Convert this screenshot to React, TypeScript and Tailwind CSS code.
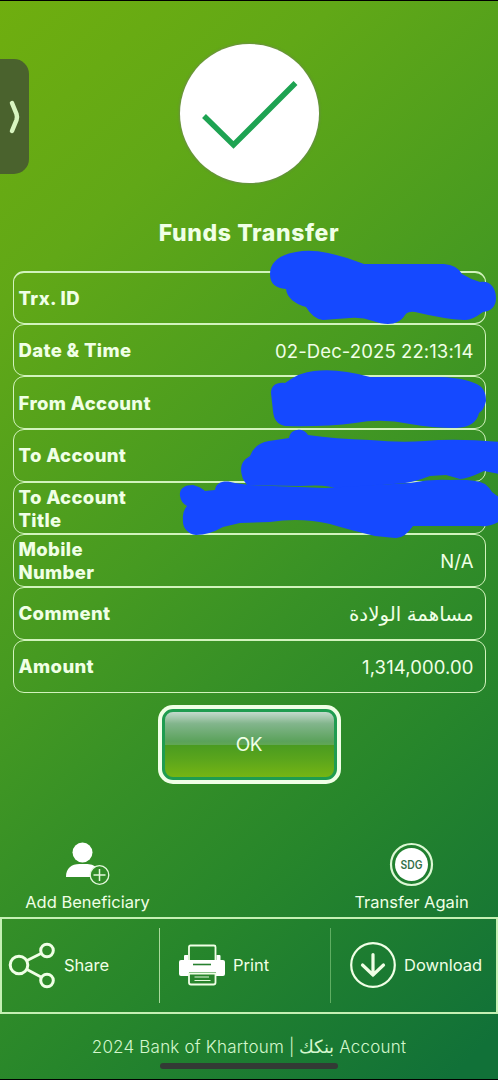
import type { ReactNode } from "react";
import { clsx } from "clsx";

interface DetailRow {
  label: string;
  value?: string;
  labelClass: string;
  rtl?: boolean;
}

const rows: DetailRow[] = [
  { label: "Trx. ID", labelClass: "w-40" },
  { label: "Date & Time", value: "02-Dec-2025 22:13:14", labelClass: "w-40" },
  { label: "From Account", labelClass: "w-40" },
  { label: "To Account", labelClass: "w-40" },
  { label: "To Account Title", labelClass: "w-30" },
  { label: "Mobile Number", value: "N/A", labelClass: "w-30" },
  { label: "Comment", value: "مساهمة الولادة", labelClass: "w-40", rtl: true },
  { label: "Amount", value: "1,314,000.00", labelClass: "w-40" },
];

export default function App() {
  return (
    <div className="relative flex h-[1080px] w-[498px] flex-col overflow-hidden border-y border-black bg-[linear-gradient(138deg,#6fae0f_0%,#61a817_20%,#469a21_45%,#389126_57%,#27862b_73%,#117138_97%)] font-['Inter','DejaVu_Sans',sans-serif] text-[#f0ffe6]">
      <SideHandle />

      <div className="mx-auto mt-[43px] flex size-[139px] shrink-0 items-center justify-center rounded-full bg-white shadow-[0_0_2px_1px_rgba(120,120,120,0.5)]">
        <svg viewBox="0 0 139 139" className="size-full" fill="none" aria-hidden="true">
          <path d="M24 72 L53.5 101 L115.500 39" stroke="#1ea352" strokeWidth="5.500" />
        </svg>
      </div>

      <h1 className="mt-[34px] text-center text-[23px] leading-8 font-extrabold tracking-[0.6px]">
        Funds Transfer
      </h1>

      <div className="relative mx-auto mt-[22px] w-[473px]">
        {rows.map((row) => (
          <Row key={row.label} {...row} />
        ))}
        <Scribbles />
      </div>

      <button className="mx-auto mt-3 h-[79px] w-[183px] shrink-0 rounded-[15px] bg-[#f0ffe6] p-1">
        <span className="flex size-full items-center justify-center rounded-[11px] border-[3px] border-[#1f9c50] bg-[linear-gradient(180deg,#c4dacd_0%,#82b58c_18%,#5ba25b_45%,#60a655_50%,#4a9b20_51%,#5aa51c_72%,#75b514_100%)] pt-0.5 text-[19px] tracking-[-0.3px]">
          OK
        </span>
      </button>

      <div className="mt-[58px] flex shrink-0 justify-between px-[26px] text-[16.5px] leading-6">
        <div className="flex w-[123px] flex-col items-center whitespace-nowrap">
          <AddPersonIcon />
          <span className="mt-[2px]">Add Beneficiary</span>
        </div>
        <div className="mr-1 flex w-[113px] flex-col items-center whitespace-nowrap">
          <CoinIcon />
          <span className="mt-[2px]">Transfer Again</span>
        </div>
      </div>

      <div className="mt-[3px] flex h-[97px] w-full shrink-0 items-center border-2 border-[#c5f0b4] text-[16.5px]">
        <Action label="Share" className="w-[157px] gap-2 pl-1.5">
          <ShareIcon />
        </Action>
        <Action label="Print" className="w-[171px] gap-2 border-l border-[#a9d99c] pl-[19px]">
          <PrinterIcon />
        </Action>
        <Action label="Download" className="flex-1 gap-2 border-l border-[#5fae62] pl-[19px]">
          <DownloadIcon />
        </Action>
      </div>

      <footer className="mt-[19px] text-center text-[17px] leading-7 font-light tracking-[0.2px] text-[#d4f7cd]">
        2024 Bank of Khartoum | <bdi className="text-lg">بنكك</bdi> Account
      </footer>
      <div className="mx-auto mt-[2px] h-[6px] w-[178px] shrink-0 rounded-full bg-[#333a35]" />
    </div>
  );
}

function SideHandle() {
  return (
    <div className="absolute top-[58px] left-0 flex h-[115px] w-[29px] items-center justify-center rounded-r-[15px] bg-[#4a622d]">
      <svg width="14" height="36" viewBox="0 0 14 36" fill="none" aria-hidden="true">
        <path
          d="M4 4 L8.500 15 Q9.500 18 8.500 21 L4 32"
          stroke="#d8f5c0"
          strokeWidth="4.500"
          strokeLinecap="round"
        />
      </svg>
    </div>
  );
}

function Row({ label, value, labelClass, rtl }: DetailRow) {
  return (
    <div className="flex h-[52.7px] items-center justify-between rounded-[11px] border border-[#d2f3bd] pt-px pr-[11px] pl-[5px] first:border-t-2">
      <span
        className={clsx("text-[18.5px] leading-[23px] font-extrabold tracking-[0.35px]", labelClass)}
      >
        {label}
      </span>
      {value ? (
        <span
          dir={rtl ? "rtl" : "ltr"}
          className={clsx("pt-0.5", rtl ? "text-[19.8px]" : "text-[18.5px] tracking-[0.1px]")}
        >
          {value}
        </span>
      ) : null}
    </div>
  );
}

// Marker strokes that hide the account details.
function Scribbles() {
  return (
    <svg
      className="pointer-events-none absolute -top-[30.5px] left-[157px]"
      width="330"
      height="310"
      viewBox="170 240 330 310"
      fill="#1549ff"
      aria-hidden="true"
    >
      <path d="M270 273C270 260 282 253 296 251Q310 248 328 252Q347 256 364 263H444Q457 264 462 273Q470 278 480 281C490 279 496 287 496 297C496 306 491 310 483 311Q471 320 464 319Q444 318 415 311Q408 310 405 314C399 324 387 325 373 320Q362 316 350 317L323 319Q313 318 306 306C295 303 287 297 286 288C276 287 270 283 270 273Z" />
      <path d="M271 392C271 385 276 381 285 382Q300 371 314 370Q338 367 370 376H440Q468 377 480 385C485 389 486 394 486 400Q484 409 479 412Q476 426 456 427Q432 427 410 423Q382 417 355 422Q325 426 285 425Q274 423 273 410Z" />
      <path d="M241 468Q241 460 250 455Q255 442 269 440L289 437C290 427 304 426 308 434Q335 438 370 439Q400 442 425 440Q455 437 500 441V473L484 470Q467 478 460 478L446 474L430 475Q414 481 405 482L337 488Q329 483 300 485L247 484Q241 477 241 468Z" />
      <path d="M180 495C179 488 184 484 193 484Q201 486 205 490L215 489C216 480 226 479 235 482L249 484L325 487L410 482Q430 478 450 479Q475 478 485 483Q490 487 492 491L500 497V520Q490 526 480 525H413Q404 538 395 537L375 535Q350 529 330 523Q300 516 270 521L240 522L223 526Q209 534 196 534C187 533 182 526 183 518Q182 511 187 505Q181 502 180 495Z" />
    </svg>
  );
}

function Action({
  label,
  className,
  children,
}: {
  label: string;
  className: string;
  children: ReactNode;
}) {
  return (
    <div className={clsx("flex h-[75px] items-center", className)}>
      {children}
      <span>{label}</span>
    </div>
  );
}

function AddPersonIcon() {
  return (
    <svg width="46" height="46" viewBox="0 0 46 46" aria-hidden="true">
      <g transform="translate(-0.500 0)">
        <circle cx="18" cy="10.500" r="10" fill="#fff" />
        <path d="M1.500 35C1.500 26 7 22 15 22H23Q28 22 31 24.500A10 10 0 0 0 26 35Z" fill="#fff" />
        <circle cx="35" cy="33" r="9.300" fill="none" stroke="#e4f8dc" strokeWidth="1.300" />
        <path d="M35 27V39M29 33H41" stroke="#e4f8dc" strokeWidth="1.500" />
      </g>
    </svg>
  );
}

function CoinIcon() {
  return (
    <svg width="46" height="46" viewBox="0 0 46 46" aria-hidden="true">
      <circle cx="22.500" cy="22.500" r="20.500" fill="none" stroke="#dcf8d4" strokeWidth="2.200" />
      <circle cx="22.500" cy="22.500" r="16.500" fill="#fff" />
      <text
        x="22.500"
        y="26.500"
        textAnchor="middle"
        fontSize="11.500"
        fontWeight="600"
        fill="#35714a"
        textLength="22"
        lengthAdjust="spacingAndGlyphs"
      >
        SDG
      </text>
    </svg>
  );
}

function ShareIcon() {
  return (
    <svg width="48" height="48" viewBox="0 0 48 48" fill="none" stroke="#f0ffe6" aria-hidden="true">
      <circle cx="11" cy="24" r="8.800" strokeWidth="3" />
      <circle cx="39" cy="9.500" r="6.300" strokeWidth="3" />
      <circle cx="39" cy="39.500" r="6.300" strokeWidth="3" />
      <path d="M19 19.500L33 12.500M19 28.500L33 36" strokeWidth="2.800" />
    </svg>
  );
}

function PrinterIcon() {
  return (
    <svg width="46" height="42" viewBox="0 0 46 42" fill="none" aria-hidden="true">
      <path d="M10 17V3Q10 1.500 11.500 1.500H35Q36.500 1.500 36.500 3V17" stroke="#f0ffe6" strokeWidth="1.800" />
      <path d="M5 16V12Q5 11 6 11H9V16H37.500V11H40.500Q41.500 11 41.500 12V16H44Q46 16 46 18V30Q46 32 44 32H37V28H10V32H2Q0 32 0 30V18Q0 16 2 16Z" fill="#fff" />
      <path d="M14 20.500H32" stroke="#27802f" strokeWidth="1.600" />
      <path d="M10 29.500H36.500V38.500Q36.500 40.500 34.500 40.500H12Q10 40.500 10 38.500Z" fill="#28852c" stroke="#f0ffe6" strokeWidth="1.800" />
      <path d="M15.500 33H30M15.500 36.500H31.500" stroke="#e4f8dc" strokeWidth="1.200" />
    </svg>
  );
}

function DownloadIcon() {
  return (
    <svg width="46" height="46" viewBox="0 0 46 46" fill="none" stroke="#f0ffe6" aria-hidden="true">
      <circle cx="23" cy="23" r="21.800" strokeWidth="2.200" />
      <path d="M23 12.500V33M12.500 23L23 33L33.500 23" strokeWidth="3.200" strokeLinecap="round" />
    </svg>
  );
}
